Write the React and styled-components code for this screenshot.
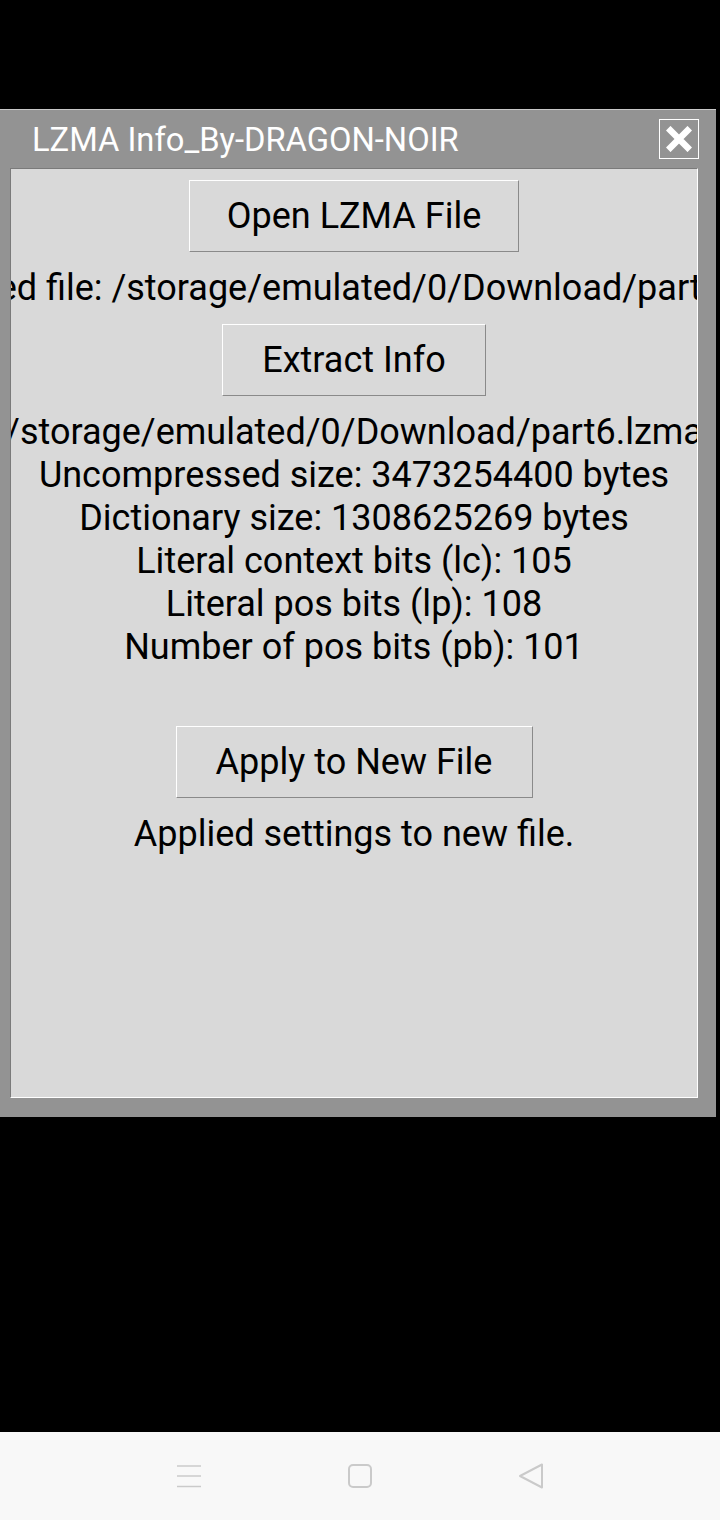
import React from "react";
import styled, { createGlobalStyle } from "styled-components";

const GlobalStyle = createGlobalStyle`
  html, body {
    margin: 0;
    padding: 0;
    background: #000000;
    font-family: Roboto, "Liberation Sans", sans-serif;
  }
`;

const Screen = styled.div`
  width: 720px;
  height: 1520px;
  display: flex;
  flex-direction: column;
  background: #000000;
  overflow: hidden;
`;

const TopSpace = styled.div`
  height: 109px;
  flex-shrink: 0;
`;

const Window = styled.div`
  width: 716px;
  height: 1008px;
  box-sizing: border-box;
  background: #939393;
  border-top: 1px solid #c8c8c8;
  display: flex;
  flex-direction: column;
  padding: 0 18px 19px 10px;
  flex-shrink: 0;
`;

const TitleBar = styled.div`
  height: 58px;
  display: flex;
  align-items: center;
  justify-content: space-between;
  padding-left: 22px;
`;

const Title = styled.div`
  color: #ffffff;
  font-size: 32.7px;
  margin-top: 2px;
`;

const CloseButton = styled.div`
  width: 40px;
  height: 40px;
  box-sizing: border-box;
  border: 1px solid #ffffff;
  display: flex;
  align-items: center;
  justify-content: center;
  margin-right: -1px;
`;

const Panel = styled.div`
  flex: 1;
  background: #d9d9d9;
  border-top: 1px solid #7a7a7a;
  border-left: 1px solid #7a7a7a;
  border-right: 1px solid #ffffff;
  border-bottom: 1px solid #ffffff;
  display: flex;
  flex-direction: column;
  align-items: center;
  padding-top: 11px;
  overflow: hidden;
`;

const Button = styled.div`
  height: 72px;
  box-sizing: border-box;
  width: ${(p) => p.w}px;
  background: #d9d9d9;
  border-top: 1px solid #ffffff;
  border-left: 1px solid #ffffff;
  border-right: 1px solid #8a8a8a;
  border-bottom: 1px solid #8a8a8a;
  display: flex;
  align-items: center;
  justify-content: center;
  font-size: 36px;
  color: #000000;
  flex-shrink: 0;
`;

const Label = styled.div`
  width: 100%;
  display: flex;
  justify-content: center;
  overflow: hidden;
  padding: 14.5px 0;
  flex-shrink: 0;
`;

const LabelText = styled.div`
  white-space: pre;
  text-align: center;
  font-size: 36px;
  line-height: 43px;
  color: #000000;
  flex-shrink: 0;
`;

const Filler = styled.div`
  flex: 1;
`;

const NavBar = styled.div`
  height: 88px;
  background: #f8f8f8;
  display: flex;
  align-items: center;
  justify-content: center;
  gap: 145px;
  box-sizing: border-box;
  flex-shrink: 0;
`;

const NavIcon = styled.svg`
  width: 26px;
  height: 26px;
  display: block;
`;

const info = [
  "/storage/emulated/0/Download/part6.lzma",
  "Uncompressed size: 3473254400 bytes",
  "Dictionary size: 1308625269 bytes",
  "Literal context bits (lc): 105",
  "Literal pos bits (lp): 108",
  "Number of pos bits (pb): 101",
  "\u00a0",
].join("\n");

export default function App() {
  return (
    <Screen>
      <GlobalStyle />
      <TopSpace />
      <Window>
        <TitleBar>
          <Title>LZMA Info_By-DRAGON-NOIR</Title>
          <CloseButton>
            <svg width="26" height="26" viewBox="0 0 26 26">
              <path
                d="M4.5 4.5 L21.5 21.5 M21.5 4.5 L4.5 21.5"
                stroke="#ffffff"
                strokeWidth="6.5"
                strokeLinecap="square"
              />
            </svg>
          </CloseButton>
        </TitleBar>
        <Panel>
          <Button w={330}>Open LZMA File</Button>
          <Label>
            <LabelText>
              Selected file: /storage/emulated/0/Download/part6.lzma
            </LabelText>
          </Label>
          <Button w={264}>Extract Info</Button>
          <Label>
            <LabelText>{info}</LabelText>
          </Label>
          <Button w={357}>Apply to New File</Button>
          <Label>
            <LabelText>Applied settings to new file.</LabelText>
          </Label>
          <Filler />
        </Panel>
      </Window>
      <Filler />
      <NavBar>
        <NavIcon viewBox="0 0 26 26">
          <path
            d="M1 3 H25 M1 13 H25 M1 23.5 H25"
            stroke="#cacaca"
            strokeWidth="1.6"
          />
        </NavIcon>
        <NavIcon viewBox="0 0 26 26">
          <rect
            x="2"
            y="2"
            width="22"
            height="22"
            rx="4"
            fill="none"
            stroke="#cacaca"
            strokeWidth="2"
          />
        </NavIcon>
        <NavIcon viewBox="0 0 26 26">
          <path
            d="M24 1.5 L24 24.5 L2 13 Z"
            fill="none"
            stroke="#cacaca"
            strokeWidth="2"
            strokeLinejoin="round"
          />
        </NavIcon>
      </NavBar>
    </Screen>
  );
}
